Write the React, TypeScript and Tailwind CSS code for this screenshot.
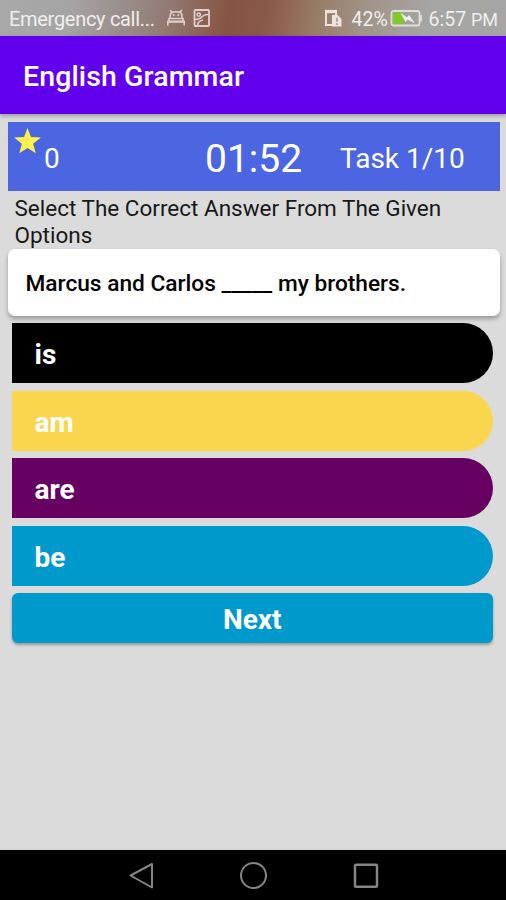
interface Option {
    label: string;
    color: string;
}

const options: Option[] = [
    { label: "is", color: "bg-black" },
    { label: "am", color: "bg-[#f9d64e]" },
    { label: "are", color: "bg-[#660061]" },
    { label: "be", color: "bg-[#0099cc]" },
];

function StatusBar() {
    return (
        <div className="flex h-9 items-center bg-[linear-gradient(100deg,#a9a9a9_0%,#a5a4a4_14%,#927d76_32%,#875443_45%,#885846_52%,#987b66_62%,#a19488_72%,#a5a5a3_84%,#a5a5a5_100%)] pl-[9px] pr-2 text-[#f0eeee]">
            <span className="w-[158px] whitespace-nowrap pt-[2px] text-[20px] tracking-[-0.3px]">Emergency call...</span>
            {/* notification icons */}
            <svg className="h-[18px] w-[18px]" viewBox="0 0 18 18" fill="none" stroke="#dfcfcc" strokeWidth="1.6">
                <path d="M3 9V7C3 4.2 5.2 2.8 9 2.8S15 4.2 15 7v2M5 3.4 3.2 1M13 3.4 14.8 1M2 9.5h14M.8 16.5v-4.2h16.4v4.2M2 9v4M16 9v4" />
                <path d="M1 13h16" />
                <path d="M5.8 6.2h1.8M10.4 6.2h1.8" strokeWidth="1.8" />
            </svg>
            <svg className="ml-2 h-[18px] w-[17px]" viewBox="0 0 17 18" fill="none" stroke="#dfcfcc" strokeWidth="1.8">
                <rect x="1.5" y="1" width="14.5" height="16" rx="0.8" />
                <circle cx="5.8" cy="5.6" r="1.7" strokeWidth="1.5" />
                <path d="M2 10.3c3 .2 5.5-.6 7-2.5s3-2.4 6-2.3" strokeWidth="1.5" />
                <path d="M4.5 16c.5-3 2.5-4.5 5.5-5" strokeWidth="1.5" />
            </svg>
            <div className="ml-auto flex items-center">
                <svg className="mr-[9px] h-[18px] w-[18px]" viewBox="0 0 18 18" fill="none" stroke="#ece4df" strokeWidth="1.9">
                    <path d="M8 16H2V2h10v4" />
                    <path d="M1 2.5h12" strokeWidth="3.2" />
                    <path d="M8 6h5.5l4 4v7.5H8z" fill="#ece4df" stroke="none" />
                    <path d="M13 8.8v4M13 14.2v1.8" stroke="#a08c7d" strokeWidth="1.5" />
                </svg>
                <span className="w-[39px] whitespace-nowrap pt-[3px] text-[19.5px]">42%</span>
                <svg className="h-[18px] w-[32px]" viewBox="0 0 32 18" fill="none">
                    <rect x="1.5" y="2" width="28" height="14.5" rx="2" stroke="#e2dfdb" strokeWidth="1.8" />
                    <path d="M31 6v6.5" stroke="#e2dfdb" strokeWidth="1.8" />
                    <path d="M3 3.5h10.5v11.5H3z" fill="#80cb28" />
                    <path d="m11 4.5 6 4.3 1.8-2.6 5.2 7.3-6.5-3.2-1.8 2.4z" fill="#f4f2ef" stroke="#f4f2ef" strokeWidth="0.5" />
                </svg>
                <span className="ml-[6px] whitespace-nowrap pt-[3px] text-[19.5px]">6:57 <span className="text-[18px]">PM</span></span>
            </div>
        </div>
    );
}

function ScorePanel() {
    return (
        <div className="relative flex h-[69px] items-center bg-[#4b66e0] text-white">
            <svg className="absolute left-[5px] top-[5px] h-[28px] w-[29px]" viewBox="0 0 29 28">
                <path d="m14.5 1 3.4 9.1 10 .4-7.8 6.3 2.7 9.4-8.3-5.3-8.3 5.3 2.7-9.4-7.8-6.3 10-.4z" fill="#fff14d" />
            </svg>
            <span className="ml-[36.5px] w-[161px] pt-[5px] text-[28px] leading-none">0</span>
            <span className="w-[135px] pt-[5px] text-[39px] leading-none">01:52</span>
            <span className="whitespace-nowrap pt-[5px] text-[28px] leading-none">Task 1/10</span>
        </div>
    );
}

function OptionButton({ label, color }: Option) {
    return (
        <button className={`flex h-[60px] w-full items-center rounded-r-full pl-[22.5px] pt-[4px] text-left text-[28px] font-bold leading-none text-white ${color}`}>
            {label}
        </button>
    );
}

function NavigationBar() {
    return (
        <div className="flex h-[50px] items-center justify-between bg-black pl-[127px] pr-[126px]">
            <svg className="h-7 w-7" viewBox="0 0 28 28" fill="none" stroke="#858585" strokeWidth="2" strokeLinejoin="round">
                <path d="M25 3v23.5L3.5 14.5z" />
            </svg>
            <svg className="h-7 w-7" viewBox="0 0 28 28" fill="none" stroke="#858585" strokeWidth="2">
                <circle cx="13.5" cy="14.5" r="12.5" />
            </svg>
            <svg className="h-7 w-7" viewBox="0 0 28 28" fill="none" stroke="#858585" strokeWidth="2.5" strokeLinejoin="round">
                <rect x="3" y="3.8" width="22" height="22" rx="1" />
            </svg>
        </div>
    );
}

export default function App() {
    return (
        <div className="flex h-[900px] w-[506px] flex-col overflow-hidden bg-[#dbdbdb] font-['Roboto',sans-serif] text-black">
            <StatusBar />
            <header className="z-10 flex h-[78px] items-center bg-[#6200ee] pl-[23px] pt-[5px] text-[28.5px] font-medium tracking-[0.1px] text-white shadow-[0_2px_4px_rgba(0,0,0,0.3)]">
                English Grammar
            </header>

            <main className="flex-1 pl-[7.5px] pr-[6.5px] pt-2">
                <ScorePanel />
                <p className="h-[58px] pl-[7px] pt-[4px] text-[22.5px] leading-[26.5px] text-[#181818]">
                    Select The Correct Answer From The Given Options
                </p>
                <div className="flex h-[67px] items-center rounded-[7px] bg-white pl-[18px] pt-[4px] text-[22.7px] font-medium shadow-[0_3px_4px_rgba(0,0,0,0.3)]">
                    Marcus and Carlos _____ my brothers.
                </div>
                <div className="mt-[7px] space-y-[7.5px] pl-[4.5px] pr-[7px]">
                    {options.map((option) => (
                        <OptionButton key={option.label} {...option} />
                    ))}
                    <button className="flex h-[50px] w-full items-center justify-center rounded-[6px] bg-[#0099cc] pt-[3px] text-[28px] font-bold text-white shadow-[0_2px_3px_rgba(0,0,0,0.3)]">
                        Next
                    </button>
                </div>
            </main>

            <NavigationBar />
        </div>
    );
}
